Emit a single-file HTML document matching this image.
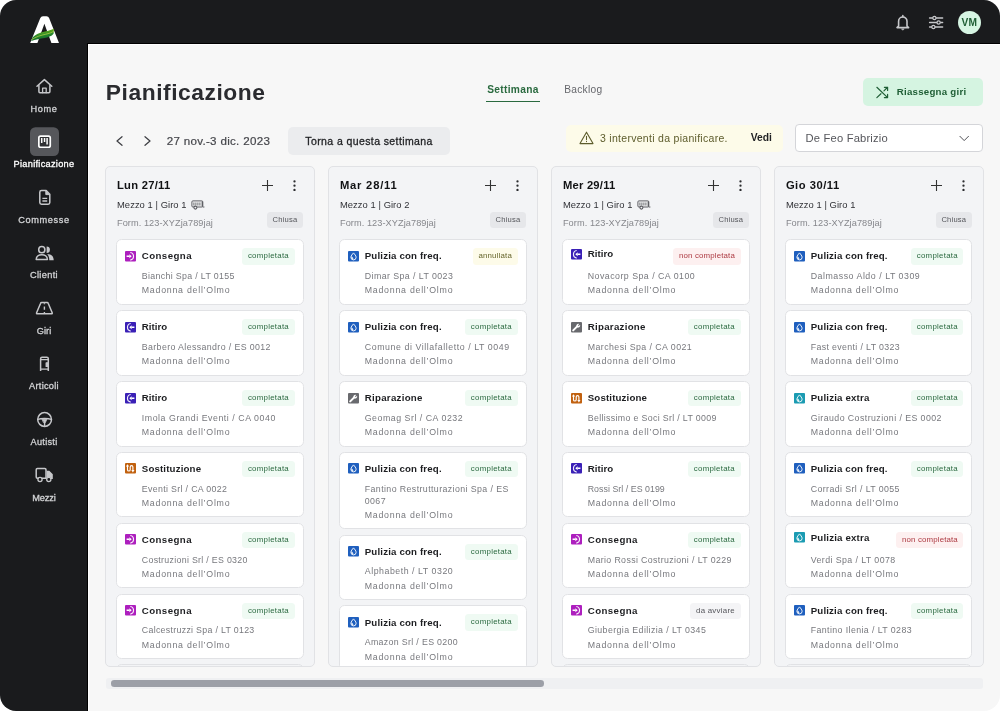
<!DOCTYPE html>
<html lang="it"><head><meta charset="utf-8"><title>Pianificazione</title>
<style>
*{box-sizing:border-box;margin:0;padding:0}
html,body{width:1000px;height:711px;overflow:hidden;background:#fff}
body{font-family:"Liberation Sans",sans-serif;position:relative;-webkit-font-smoothing:antialiased}
.frame{position:absolute;left:0;top:0;width:1000px;height:711px;will-change:transform}
.side{position:absolute;left:0;top:0;width:88px;height:711px;background:#1a1b1d;border-radius:16px 0 0 16px}
.topb{position:absolute;left:70px;top:0;width:930px;height:44px;background:#1a1b1d;border-top-right-radius:16px}
.bl{position:absolute;background:#000}
.main{position:absolute;left:88px;top:44px;width:912px;height:667px;background:#f7f7f7;border-top:1px solid #fff;border-left:1px solid #fff;border-bottom-right-radius:16px}
.sidesvg{position:absolute;left:0;top:0}
.topsvg{position:absolute;left:880px;top:0}
.nl{position:absolute;left:0;width:88px;text-align:center;font-size:9.2px;line-height:12px;color:#d2d3d5;letter-spacing:.25px;-webkit-text-stroke:.3px #d2d3d5}
.nl.sel{color:#fff;-webkit-text-stroke:.3px #fff}
.avatar{position:absolute;left:957.7px;top:10.6px;width:23.4px;height:23.4px;border-radius:50%;background:#d6f5e3;color:#1f5e35;font-weight:bold;font-size:10.2px;line-height:23.6px;text-align:center;letter-spacing:.3px}
.abs{position:absolute;white-space:nowrap}
h1.abs{left:105.8px;top:76.9px;font-size:22.8px;line-height:30px;font-weight:bold;color:#2a2b2f;letter-spacing:.55px}
.tab1{left:487.2px;top:82.5px;font-size:10.2px;line-height:14px;font-weight:bold;color:#2a6a3f;letter-spacing:.31px}
.tabline{position:absolute;left:485.5px;top:100.6px;width:54.5px;height:1.4px;background:#2a6a3f}
.tab2{left:564.2px;top:82.5px;font-size:10.2px;line-height:14px;color:#66676c;letter-spacing:.27px}
.btng{position:absolute;left:863px;top:78px;width:120.4px;height:28px;border-radius:5px;background:#d5f4e1}
.btng span{position:absolute;left:33.7px;top:6.9px;font-size:9.7px;line-height:14px;font-weight:bold;color:#1f5e35;white-space:nowrap;letter-spacing:.25px}
.btng svg{position:absolute;left:13.3px;top:7.9px}
.chev{position:absolute}
.date{left:166.7px;top:132.6px;font-size:11.6px;line-height:15px;color:#46474c;-webkit-text-stroke:.2px #46474c;letter-spacing:.3px}
.btn2{position:absolute;left:288.2px;top:127.2px;width:161.8px;height:27.4px;border-radius:5px;background:#ebecee}
.btn2 span{position:absolute;left:0;width:100%;text-align:center;top:6.4px;font-size:10.5px;line-height:14px;color:#1f2023;-webkit-text-stroke:.3px #1f2023;white-space:nowrap;letter-spacing:.4px}
.warn{position:absolute;left:566.2px;top:124.5px;width:217px;height:27px;border-radius:5px;background:#fdfbe9}
.warn svg{position:absolute;left:12.6px;top:6.5px}
.warn .t{position:absolute;left:33.8px;top:6.5px;font-size:10.5px;line-height:14px;color:#5d5c2c;white-space:nowrap;letter-spacing:.29px}
.warn .v{position:absolute;left:184.5px;top:6.5px;font-size:10.3px;line-height:14px;color:#1f2023;font-weight:bold;white-space:nowrap}
.sel2{position:absolute;left:795.2px;top:124.4px;width:188px;height:27.2px;border-radius:4px;background:#fff;border:1px solid #d4d5d9}
.sel2 span{position:absolute;left:9.4px;top:5.5px;font-size:11.2px;line-height:15px;color:#55565b;white-space:nowrap;letter-spacing:.18px}
.sel2 svg{position:absolute;left:162.6px;top:9.3px}
.col{position:absolute;top:165.7px;width:209.8px;height:501.5px;background:#f3f4f6;border:1px solid #e1e2e5;border-radius:5px;overflow:hidden}
.cday{position:absolute;left:10.9px;top:11.5px;font-size:11.2px;line-height:15px;font-weight:bold;color:#111214;white-space:nowrap;letter-spacing:.26px}
.plus{position:absolute;left:155.9px;top:13.5px;width:11px;height:11px}
.dots{position:absolute;left:187.1px;top:13.4px;width:3px;height:11.4px}
.cmz{position:absolute;left:10.9px;top:31.6px;font-size:9.4px;line-height:13px;color:#303136;white-space:nowrap;letter-spacing:.06px}
.trl{position:absolute;left:74.5px;top:1.5px}
.cform{position:absolute;left:10.9px;top:50.5px;font-size:9.2px;line-height:13px;color:#86878c;white-space:nowrap;letter-spacing:.07px}
.chiusa{position:absolute;left:160.8px;top:45.5px;width:36.1px;height:15.6px;border-radius:3.5px;background:#e6e7ea;font-size:7.6px;line-height:15.6px;text-align:center;color:#55565b;letter-spacing:.2px}
.cards{position:absolute;left:10.4px;top:72.7px;width:187.1px}
.card{position:relative;width:187.1px;background:#fff;border:1px solid #e1e2e5;border-radius:5.5px;margin-bottom:5.35px;padding:11.5px 8px 0 24.3px;overflow:hidden}
.ch{position:relative;height:13px;margin-bottom:5px}
.ic{position:absolute;left:-16.7px;top:-1px;width:11px;height:11px}
.ct{position:absolute;left:0;top:-2.6px;font-size:9.7px;line-height:14px;font-weight:bold;color:#1d1e21;white-space:nowrap;letter-spacing:.41px}

.bdg{position:absolute;right:0;top:-3.5px;height:16.2px;border-radius:3.5px;font-size:7.9px;line-height:16.9px;padding:0 5.6px;overflow:hidden;white-space:nowrap;letter-spacing:.25px}
.bc{background:#effaf3;color:#2c6a41}.ba{background:#fdfbe9;color:#66652c;letter-spacing:.17px}.bn{background:#fdf0f0;color:#ad3a42;letter-spacing:.14px}.bd{background:#f4f4f6;color:#55565b}
.cl{font-size:8.8px;line-height:12px;color:#77787d;margin-bottom:2.4px;letter-spacing:.35px;white-space:nowrap;position:relative}.cl.m{letter-spacing:.75px}
.strack{position:absolute;left:105.8px;top:677.8px;width:877.6px;height:10.8px;background:#eff0f2;border-radius:3px}
.sthumb{position:absolute;left:110.5px;top:680px;width:433px;height:6.6px;border-radius:3.3px;background:#9c9fa7}
</style></head><body>
<div class="frame">
<div class="side"></div><div class="topb"></div>
<div class="main"></div><div class="bl" style="left:87px;top:43px;width:1px;height:668px"></div><div class="bl" style="left:87px;top:43px;width:913px;height:1px"></div>
<svg class="sidesvg" width="88" height="711" viewBox="0 0 88 711" fill="none" stroke="#c6c7ca" stroke-width="1.5" stroke-linejoin="round" stroke-linecap="round">
<!-- logo -->
<path d="M30.2 43L40.2 18.3Q41 16.3 43 16.3H46.5Q48.4 16.3 49.1 18L59 43H51.4L44.4 23.8L37.4 43Z" fill="#fff" stroke="none"/>
<path d="M31.2 40.9L32.7 37.2C35.5 34.7 39 33.2 42 32.3C46 31.1 50.5 30.5 53.9 28.8L53.6 33.7C51.6 36.4 48 37.2 44.6 37.9C40 38.7 35.5 39.2 31.2 40.9Z" fill="url(#lg)" stroke="none"/>
<path d="M32 39.4C36 36.6 41 35.3 45.5 34.3C49 33.5 52 32.6 53.7 31.2" stroke="#d6e14a" stroke-width=".6" fill="none"/>
<!-- home -->
<path d="M37 86.2L44.4 79.6L51.8 86.2"/><path d="M38.9 85.5V91.6Q38.9 92.7 40 92.7H48.8Q49.9 92.7 49.9 91.6V85.5"/><path d="M42.6 92.7V88.2H46.2V92.7" stroke-width="1.3"/>
<!-- pianificazione -->
<rect x="30" y="127.2" width="29" height="28.8" rx="5.5" fill="#56575b" stroke="none"/>
<rect x="38.85" y="136.05" width="11.4" height="11.2" rx="1.8" stroke="#fff" stroke-width="1.7" fill="#303134"/>
<path d="M41.7 138V143M44.55 138V141.9M47.1 138V144.4" stroke="#fff" stroke-width="1.5" stroke-linecap="butt"/>
<!-- commesse -->
<path d="M46.2 190.6H41.5Q39.8 190.6 39.8 192.3V202.6Q39.8 204.3 41.5 204.3H48.1Q49.8 204.3 49.8 202.6V194.2Z"/><path d="M45.8 190.8V194.6H49.6" fill="#c6c7ca" stroke-width="1"/><path d="M42.4 198.4H47.2M42.4 201H47.2" stroke-width="1.4" stroke-linecap="butt"/>
<!-- clienti -->
<circle cx="41.8" cy="249.7" r="3.1" stroke-width="1.5"/>
<path d="M36.2 259.5C36.2 253.2 47.4 253.2 47.4 259.5Z" stroke-width="1.5"/>
<path d="M46.6 246.4A3.3 3.3 0 0 1 46.6 253Z" fill="#c6c7ca" stroke="none"/>
<path d="M47.2 254C51.5 254 53.7 256.5 53.7 260.2H49.3C49.3 257.5 48.6 255.5 47.2 254Z" fill="#c6c7ca" stroke="none"/>
<!-- giri -->
<path d="M41.7 302.6H47.1Q48 302.6 48.3 303.5L52.2 312.7Q52.6 313.8 51.4 313.8H37.4Q36.2 313.8 36.6 312.7L40.5 303.5Q40.8 302.6 41.7 302.6Z"/>
<path d="M44.4 303.2V304.3M44.4 306.6V309.8M44.4 312V313.4" stroke-width="1.4" stroke-linecap="butt"/>
<!-- articoli -->
<path d="M40.6 371V358.8Q40.6 357.3 42.1 357.3H46.8Q48.3 357.3 48.3 358.8V371" stroke-linecap="butt"/><path d="M40.6 369.2H48.3M40.6 359.6H48.3" stroke-width="1.2"/><path d="M48.3 362.9H46.2V366.4H48.3" stroke-width="1.3" fill="#c6c7ca"/>
<!-- autisti -->
<circle cx="44.6" cy="419.5" r="6.9"/><path d="M38 419.4C41 418.3 48.2 418.3 51.2 419.4M44.6 426V422" stroke-width="1.4"/><path d="M42.3 419.2H46.9L45.4 422.6H43.8Z" fill="#c6c7ca" stroke-width=".8"/>
<!-- mezzi -->
<path d="M38 478.3H37.4Q36.2 478.3 36.2 477.1V469.7Q36.2 468.5 37.4 468.5H44.8Q46 468.5 46 469.7V478.3H42.2"/>
<path d="M46.6 470.8H49.3L52.8 474.2V478.9H50.8A2 2 0 0 0 46.8 478.9H46.6Z" fill="#c6c7ca" stroke="none"/>
<circle cx="40" cy="479.5" r="2.1" stroke-width="1.3"/><circle cx="48.8" cy="479.5" r="2.1" stroke-width="1.3" fill="#1a1b1d"/>
<defs><linearGradient id="lg" x1="0" y1="0" x2="0.3" y2="1"><stop offset="0" stop-color="#9ccb1a"/><stop offset=".35" stop-color="#5aa51c"/><stop offset=".6" stop-color="#2a8a2c"/><stop offset="1" stop-color="#0f6a2c"/></linearGradient></defs>
</svg>
<div class="nl" style="top:102.6px;letter-spacing:0.646px">Home</div><div class="nl sel" style="top:158.4px;letter-spacing:0.3px">Pianificazione</div><div class="nl" style="top:213.6px;letter-spacing:0.654px">Commesse</div><div class="nl" style="top:269.3px;letter-spacing:0.353px">Clienti</div><div class="nl" style="top:324.7px;letter-spacing:0.076px">Giri</div><div class="nl" style="top:380.4px;letter-spacing:0.29px">Articoli</div><div class="nl" style="top:436.1px;letter-spacing:0.296px">Autisti</div><div class="nl" style="top:491.5px;letter-spacing:-0.08px">Mezzi</div>
<svg class="topsvg" width="120" height="44" viewBox="880 0 120 44" fill="none" stroke="#c6c7ca" stroke-width="1.6" stroke-linecap="round" stroke-linejoin="round">
<path d="M898.6 26V21.2A4.2 4.2 0 0 1 907 21.2V26L908.6 27.6H897Z"/><path d="M901.6 29.2A1.3 1.3 0 0 0 904 29.2Z" fill="#c6c7ca" stroke-width=".6"/><path d="M902.8 15.6V16.8"/>
<path d="M929.6 18H942.6M929.6 22.5H942.6M929.6 27H942.6" stroke-width="1.5"/>
<circle cx="934.4" cy="18" r="1.6" fill="#1a1b1d" stroke-width="1.2"/><circle cx="938.6" cy="22.5" r="1.6" fill="#1a1b1d" stroke-width="1.2"/><circle cx="933.4" cy="27" r="1.6" fill="#1a1b1d" stroke-width="1.2"/>
</svg>
<div class="avatar">VM</div>
<h1 class="abs">Pianificazione</h1>
<div class="abs tab1">Settimana</div><div class="tabline"></div>
<div class="abs tab2">Backlog</div>
<div class="btng"><svg width="12.9" height="12.9" viewBox="0 0 12 12" fill="none" stroke="#1f5e35" stroke-width="1.1" stroke-linecap="round" stroke-linejoin="round"><path d="M.8 1.2L10.8 10.8M.8 10.8L4.6 7.2M7.4 4.6L10.8 1.2M7.8 1.2H10.8V4.2M7.8 10.8H10.8V7.8"/></svg><span>Riassegna giri</span></div>
<svg class="chev" style="left:116px;top:136.2px" width="7" height="10" viewBox="0 0 7 10" fill="none" stroke="#3c3d42" stroke-width="1.2" stroke-linecap="round" stroke-linejoin="round"><path d="M6 .7L1 5L6 9.3"/></svg>
<svg class="chev" style="left:143.8px;top:136.2px" width="7" height="10" viewBox="0 0 7 10" fill="none" stroke="#3c3d42" stroke-width="1.2" stroke-linecap="round" stroke-linejoin="round"><path d="M1 .7L6 5L1 9.3"/></svg>
<div class="abs date">27 nov.-3 dic. 2023</div>
<div class="btn2"><span>Torna a questa settimana</span></div>
<div class="warn"><svg width="15" height="14" viewBox="0 0 15 14" fill="none" stroke="#5d5c2c" stroke-width="1.1" stroke-linejoin="round" stroke-linecap="round"><path d="M7.5 1.2L14 12.6H1Z"/><path d="M7.5 5.2V8.6M7.5 10.4V10.6"/></svg><span class="t">3 interventi da pianificare.</span><span class="v">Vedi</span></div>
<div class="sel2"><span>De Feo Fabrizio</span><svg width="10.4" height="6.9" viewBox="0 0 12 8" fill="none" stroke="#4e4f54" stroke-width="1.15" stroke-linecap="round" stroke-linejoin="round"><path d="M1 1.5L6 6.5L11 1.5"/></svg></div>
<div class="col" style="left:105.1px"><div class="cday" style="letter-spacing:0.267px">Lun 27/11</div><svg class="plus" viewBox="0 0 11 11"><path d="M5.5 0V11M0 5.5H11" stroke="#333" stroke-width="1.1"/></svg><svg class="dots" viewBox="0 0 3 11.4"><circle cx="1.5" cy="1.4" r="1.15" fill="#2a2b2e"/><circle cx="1.5" cy="5.7" r="1.15" fill="#2a2b2e"/><circle cx="1.5" cy="10" r="1.15" fill="#2a2b2e"/></svg><div class="cmz">Mezzo 1 | Giro 1<svg class="trl" viewBox="0 0 14 10" width="14" height="10" fill="none" stroke="#5c5d62"><rect x=".9" y=".9" width="10.9" height="6.1" rx="1" stroke-width="1"/><path d="M2.9 2.5V5.5M4.9 2.5V5.5M6.9 2.5V5.5M8.9 2.5V5.5" stroke-width=".9"/><path d="M11.3 1.5V6.5" stroke-width="1.3"/><path d="M11.8 7H13.4" stroke-width="1"/><circle cx="4.4" cy="7.6" r="1.5" stroke-width="1.1" fill="#f3f4f6"/></svg></div><div class="cform">Form. 123-XYZja789jaj</div><div class="chiusa">Chiusa</div><div class="cards"><div class="card" style="height:65.5px"><div class="ch"><svg class="ic" style="top:-1.1px" viewBox="0 0 11 11"><rect width="11" height="10.6" rx="1" fill="#ad1fbe"/><path d="M1.6 5.3H4.6" stroke="#fff" stroke-width="1.5" fill="none"/><path d="M4.4 3.3L6.7 5.3L4.4 7.3Z" fill="#fff"/><path d="M5.3 1.5A3.85 3.85 0 0 1 5.3 9.1" stroke="#fff" stroke-width="1.15" fill="none" opacity=".92"/></svg><span class="ct" style="top:-2.84px;letter-spacing:0.42px">Consegna</span><span class="bdg bc">completata</span></div><div class="cl" style="top:0.16px;letter-spacing:0.34px">Bianchi Spa / LT 0155</div><div class="cl m" style="top:-0.24px">Madonna dell’Olmo</div></div><div class="card" style="height:65.5px"><div class="ch"><svg class="ic" style="top:-1.07px" viewBox="0 0 11 11"><rect width="11" height="10.6" rx="1" fill="#3a20b6"/><path d="M9.4 5.3H6.4" stroke="#fff" stroke-width="1.5" fill="none"/><path d="M6.6 3.3L4.3 5.3L6.6 7.3Z" fill="#fff"/><path d="M5.7 1.5A3.85 3.85 0 0 0 5.7 9.1" stroke="#fff" stroke-width="1.15" fill="none" opacity=".92"/></svg><span class="ct" style="top:-2.69px;letter-spacing:0.02px">Ritiro</span><span class="bdg bc">completata</span></div><div class="cl" style="top:0.31px;letter-spacing:0.384px">Barbero Alessandro / ES 0012</div><div class="cl m" style="top:-0.09px">Madonna dell’Olmo</div></div><div class="card" style="height:65.5px"><div class="ch"><svg class="ic" style="top:-1.04px" viewBox="0 0 11 11"><rect width="11" height="10.6" rx="1" fill="#3a20b6"/><path d="M9.4 5.3H6.4" stroke="#fff" stroke-width="1.5" fill="none"/><path d="M6.6 3.3L4.3 5.3L6.6 7.3Z" fill="#fff"/><path d="M5.7 1.5A3.85 3.85 0 0 0 5.7 9.1" stroke="#fff" stroke-width="1.15" fill="none" opacity=".92"/></svg><span class="ct" style="top:-2.54px;letter-spacing:0.02px">Ritiro</span><span class="bdg bc">completata</span></div><div class="cl" style="top:0.46px;letter-spacing:0.543px">Imola Grandi Eventi / CA 0040</div><div class="cl m" style="top:0.06px">Madonna dell’Olmo</div></div><div class="card" style="height:65.5px"><div class="ch"><svg class="ic" style="top:-1.01px" viewBox="0 0 11 11"><rect width="11" height="10.6" rx="1" fill="#c1610f"/><path d="M2.5 2.6V6.7A1.35 1.35 0 0 0 5.2 6.7V3.9A1.35 1.35 0 0 1 7.9 3.9V8" stroke="#fff" stroke-width="1.15" fill="none"/><path d="M.9 3.6L2.5 1.3L4.1 3.6Z M6.3 7.1L7.9 9.4L9.5 7.1Z" fill="#fff"/></svg><span class="ct" style="top:-2.39px;letter-spacing:0.15px">Sostituzione</span><span class="bdg bc">completata</span></div><div class="cl" style="top:0.61px;letter-spacing:0.338px">Eventi Srl / CA 0022</div><div class="cl m" style="top:0.21px">Madonna dell’Olmo</div></div><div class="card" style="height:65.5px"><div class="ch"><svg class="ic" style="top:-0.98px" viewBox="0 0 11 11"><rect width="11" height="10.6" rx="1" fill="#ad1fbe"/><path d="M1.6 5.3H4.6" stroke="#fff" stroke-width="1.5" fill="none"/><path d="M4.4 3.3L6.7 5.3L4.4 7.3Z" fill="#fff"/><path d="M5.3 1.5A3.85 3.85 0 0 1 5.3 9.1" stroke="#fff" stroke-width="1.15" fill="none" opacity=".92"/></svg><span class="ct" style="top:-2.24px;letter-spacing:0.42px">Consegna</span><span class="bdg bc">completata</span></div><div class="cl" style="top:0.76px;letter-spacing:0.305px">Costruzioni Srl / ES 0320</div><div class="cl m" style="top:0.36px">Madonna dell’Olmo</div></div><div class="card" style="height:65.5px"><div class="ch"><svg class="ic" style="top:-0.95px" viewBox="0 0 11 11"><rect width="11" height="10.6" rx="1" fill="#ad1fbe"/><path d="M1.6 5.3H4.6" stroke="#fff" stroke-width="1.5" fill="none"/><path d="M4.4 3.3L6.7 5.3L4.4 7.3Z" fill="#fff"/><path d="M5.3 1.5A3.85 3.85 0 0 1 5.3 9.1" stroke="#fff" stroke-width="1.15" fill="none" opacity=".92"/></svg><span class="ct" style="top:-2.09px;letter-spacing:0.42px">Consegna</span><span class="bdg bc">completata</span></div><div class="cl" style="top:-0.09px;letter-spacing:0.307px">Calcestruzzi Spa / LT 0123</div><div class="cl m" style="top:0.51px">Madonna dell’Olmo</div></div><div class="card" style="height:65.5px;background:transparent"><div class="ch"><svg class="ic" style="top:-0.92px" viewBox="0 0 11 11"><rect width="11" height="10.6" rx="1" fill="#ad1fbe"/><path d="M1.6 5.3H4.6" stroke="#fff" stroke-width="1.5" fill="none"/><path d="M4.4 3.3L6.7 5.3L4.4 7.3Z" fill="#fff"/><path d="M5.3 1.5A3.85 3.85 0 0 1 5.3 9.1" stroke="#fff" stroke-width="1.15" fill="none" opacity=".92"/></svg><span class="ct" style="top:-1.94px;letter-spacing:0.42px">Consegna</span><span class="bdg bc">completata</span></div><div class="cl" style="top:0.06px;letter-spacing:0.38px">Edilizia Srl / LT 0456</div><div class="cl m" style="top:0.66px">Madonna dell’Olmo</div></div></div></div>
<div class="col" style="left:328.07px"><div class="cday" style="letter-spacing:0.79px">Mar 28/11</div><svg class="plus" viewBox="0 0 11 11"><path d="M5.5 0V11M0 5.5H11" stroke="#333" stroke-width="1.1"/></svg><svg class="dots" viewBox="0 0 3 11.4"><circle cx="1.5" cy="1.4" r="1.15" fill="#2a2b2e"/><circle cx="1.5" cy="5.7" r="1.15" fill="#2a2b2e"/><circle cx="1.5" cy="10" r="1.15" fill="#2a2b2e"/></svg><div class="cmz">Mezzo 1 | Giro 2</div><div class="cform">Form. 123-XYZja789jaj</div><div class="chiusa">Chiusa</div><div class="cards"><div class="card" style="height:65.5px"><div class="ch"><svg class="ic" style="top:-1.1px" viewBox="0 0 11 11"><rect width="11" height="10.6" rx="1" fill="#1f5fbe"/><path d="M5.5 1.9C6.6 3.2 8.1 4.8 8.1 6.3A2.6 2.6 0 0 1 2.9 6.3C2.9 4.8 4.4 3.2 5.5 1.9Z" stroke="#fff" stroke-width="0.9" fill="none"/><path d="M3.3 5.6C4.6 5.6 5.4 7 5.4 8.5C4 8.5 3.1 7.4 3.3 5.6Z" fill="#fff" opacity="0.85"/></svg><span class="ct" style="top:-2.84px;letter-spacing:0.16px">Pulizia con freq.</span><span class="bdg ba">annullata</span></div><div class="cl" style="top:0.16px;letter-spacing:0.428px">Dimar Spa / LT 0023</div><div class="cl m" style="top:-0.24px">Madonna dell’Olmo</div></div><div class="card" style="height:65.5px"><div class="ch"><svg class="ic" style="top:-1.07px" viewBox="0 0 11 11"><rect width="11" height="10.6" rx="1" fill="#1f5fbe"/><path d="M5.5 1.9C6.6 3.2 8.1 4.8 8.1 6.3A2.6 2.6 0 0 1 2.9 6.3C2.9 4.8 4.4 3.2 5.5 1.9Z" stroke="#fff" stroke-width="0.9" fill="none"/><path d="M3.3 5.6C4.6 5.6 5.4 7 5.4 8.5C4 8.5 3.1 7.4 3.3 5.6Z" fill="#fff" opacity="0.85"/></svg><span class="ct" style="top:-2.69px;letter-spacing:0.16px">Pulizia con freq.</span><span class="bdg bc">completata</span></div><div class="cl" style="top:0.31px;letter-spacing:0.568px">Comune di Villafalletto / LT 0049</div><div class="cl m" style="top:-0.09px">Madonna dell’Olmo</div></div><div class="card" style="height:65.5px"><div class="ch"><svg class="ic" style="top:-1.04px" viewBox="0 0 11 11"><rect width="11" height="10.6" rx="1" fill="#696a6e"/><path d="M2.2 8.4L6.2 4.4" stroke="#fff" stroke-width="2" stroke-linecap="round" fill="none"/><path d="M5.3 3.6A2.2 2.2 0 0 1 8.3 1.9L6.9 3.3L7.7 4.1L9.1 2.7A2.2 2.2 0 0 1 6.3 5.4Z" fill="#fff"/></svg><span class="ct" style="top:-2.54px;letter-spacing:0.28px">Riparazione</span><span class="bdg bc">completata</span></div><div class="cl" style="top:0.46px;letter-spacing:0.518px">Geomag Srl / CA 0232</div><div class="cl m" style="top:0.06px">Madonna dell’Olmo</div></div><div class="card" style="height:77.3px"><div class="ch"><svg class="ic" style="top:-1.01px" viewBox="0 0 11 11"><rect width="11" height="10.6" rx="1" fill="#1f5fbe"/><path d="M5.5 1.9C6.6 3.2 8.1 4.8 8.1 6.3A2.6 2.6 0 0 1 2.9 6.3C2.9 4.8 4.4 3.2 5.5 1.9Z" stroke="#fff" stroke-width="0.9" fill="none"/><path d="M3.3 5.6C4.6 5.6 5.4 7 5.4 8.5C4 8.5 3.1 7.4 3.3 5.6Z" fill="#fff" opacity="0.85"/></svg><span class="ct" style="top:-2.39px;letter-spacing:0.16px">Pulizia con freq.</span><span class="bdg bc">completata</span></div><div class="cl" style="top:0.61px;letter-spacing:0.407px">Fantino Restrutturazioni Spa / ES</div><div class="cl" style="top:-1.79px;letter-spacing:0.407px">0067</div><div class="cl m" style="top:-2.19px">Madonna dell’Olmo</div></div><div class="card" style="height:65.5px"><div class="ch"><svg class="ic" style="top:-0.98px" viewBox="0 0 11 11"><rect width="11" height="10.6" rx="1" fill="#1f5fbe"/><path d="M5.5 1.9C6.6 3.2 8.1 4.8 8.1 6.3A2.6 2.6 0 0 1 2.9 6.3C2.9 4.8 4.4 3.2 5.5 1.9Z" stroke="#fff" stroke-width="0.9" fill="none"/><path d="M3.3 5.6C4.6 5.6 5.4 7 5.4 8.5C4 8.5 3.1 7.4 3.3 5.6Z" fill="#fff" opacity="0.85"/></svg><span class="ct" style="top:-2.04px;letter-spacing:0.16px">Pulizia con freq.</span><span class="bdg bc">completata</span></div><div class="cl" style="top:-0.04px;letter-spacing:0.53px">Alphabeth / LT 0320</div><div class="cl m" style="top:0.56px">Madonna dell’Olmo</div></div><div class="card" style="height:65.5px"><div class="ch"><svg class="ic" style="top:-0.95px" viewBox="0 0 11 11"><rect width="11" height="10.6" rx="1" fill="#1f5fbe"/><path d="M5.5 1.9C6.6 3.2 8.1 4.8 8.1 6.3A2.6 2.6 0 0 1 2.9 6.3C2.9 4.8 4.4 3.2 5.5 1.9Z" stroke="#fff" stroke-width="0.9" fill="none"/><path d="M3.3 5.6C4.6 5.6 5.4 7 5.4 8.5C4 8.5 3.1 7.4 3.3 5.6Z" fill="#fff" opacity="0.85"/></svg><span class="ct" style="top:-1.89px;letter-spacing:0.16px">Pulizia con freq.</span><span class="bdg bc">completata</span></div><div class="cl" style="top:0.11px;letter-spacing:0.337px">Amazon Srl / ES 0200</div><div class="cl m" style="top:0.71px">Madonna dell’Olmo</div></div></div></div>
<div class="col" style="left:551.04px"><div class="cday" style="letter-spacing:0.245px">Mer 29/11</div><svg class="plus" viewBox="0 0 11 11"><path d="M5.5 0V11M0 5.5H11" stroke="#333" stroke-width="1.1"/></svg><svg class="dots" viewBox="0 0 3 11.4"><circle cx="1.5" cy="1.4" r="1.15" fill="#2a2b2e"/><circle cx="1.5" cy="5.7" r="1.15" fill="#2a2b2e"/><circle cx="1.5" cy="10" r="1.15" fill="#2a2b2e"/></svg><div class="cmz">Mezzo 1 | Giro 1<svg class="trl" viewBox="0 0 14 10" width="14" height="10" fill="none" stroke="#5c5d62"><rect x=".9" y=".9" width="10.9" height="6.1" rx="1" stroke-width="1"/><path d="M2.9 2.5V5.5M4.9 2.5V5.5M6.9 2.5V5.5M8.9 2.5V5.5" stroke-width=".9"/><path d="M11.3 1.5V6.5" stroke-width="1.3"/><path d="M11.8 7H13.4" stroke-width="1"/><circle cx="4.4" cy="7.6" r="1.5" stroke-width="1.1" fill="#f3f4f6"/></svg></div><div class="cform">Form. 123-XYZja789jaj</div><div class="chiusa">Chiusa</div><div class="cards"><div class="card" style="height:65.5px"><div class="ch"><svg class="ic" style="top:-3.1px" viewBox="0 0 11 11"><rect width="11" height="10.6" rx="1" fill="#3a20b6"/><path d="M9.4 5.3H6.4" stroke="#fff" stroke-width="1.5" fill="none"/><path d="M6.6 3.3L4.3 5.3L6.6 7.3Z" fill="#fff"/><path d="M5.7 1.5A3.85 3.85 0 0 0 5.7 9.1" stroke="#fff" stroke-width="1.15" fill="none" opacity=".92"/></svg><span class="ct" style="top:-4.84px;letter-spacing:0.02px">Ritiro</span><span class="bdg bn">non completata</span></div><div class="cl" style="top:0.16px;letter-spacing:0.481px">Novacorp Spa / CA 0100</div><div class="cl m" style="top:-0.24px">Madonna dell’Olmo</div></div><div class="card" style="height:65.5px"><div class="ch"><svg class="ic" style="top:-1.07px" viewBox="0 0 11 11"><rect width="11" height="10.6" rx="1" fill="#696a6e"/><path d="M2.2 8.4L6.2 4.4" stroke="#fff" stroke-width="2" stroke-linecap="round" fill="none"/><path d="M5.3 3.6A2.2 2.2 0 0 1 8.3 1.9L6.9 3.3L7.7 4.1L9.1 2.7A2.2 2.2 0 0 1 6.3 5.4Z" fill="#fff"/></svg><span class="ct" style="top:-2.69px;letter-spacing:0.28px">Riparazione</span><span class="bdg bc">completata</span></div><div class="cl" style="top:0.31px;letter-spacing:0.433px">Marchesi Spa / CA 0021</div><div class="cl m" style="top:-0.09px">Madonna dell’Olmo</div></div><div class="card" style="height:65.5px"><div class="ch"><svg class="ic" style="top:-1.04px" viewBox="0 0 11 11"><rect width="11" height="10.6" rx="1" fill="#c1610f"/><path d="M2.5 2.6V6.7A1.35 1.35 0 0 0 5.2 6.7V3.9A1.35 1.35 0 0 1 7.9 3.9V8" stroke="#fff" stroke-width="1.15" fill="none"/><path d="M.9 3.6L2.5 1.3L4.1 3.6Z M6.3 7.1L7.9 9.4L9.5 7.1Z" fill="#fff"/></svg><span class="ct" style="top:-2.54px;letter-spacing:0.15px">Sostituzione</span><span class="bdg bc">completata</span></div><div class="cl" style="top:0.46px;letter-spacing:0.339px">Bellissimo e Soci Srl / LT 0009</div><div class="cl m" style="top:0.06px">Madonna dell’Olmo</div></div><div class="card" style="height:65.5px"><div class="ch"><svg class="ic" style="top:-1.01px" viewBox="0 0 11 11"><rect width="11" height="10.6" rx="1" fill="#3a20b6"/><path d="M9.4 5.3H6.4" stroke="#fff" stroke-width="1.5" fill="none"/><path d="M6.6 3.3L4.3 5.3L6.6 7.3Z" fill="#fff"/><path d="M5.7 1.5A3.85 3.85 0 0 0 5.7 9.1" stroke="#fff" stroke-width="1.15" fill="none" opacity=".92"/></svg><span class="ct" style="top:-2.39px;letter-spacing:0.02px">Ritiro</span><span class="bdg bc">completata</span></div><div class="cl" style="top:0.61px;letter-spacing:0.043px">Rossi Srl / ES 0199</div><div class="cl m" style="top:0.21px">Madonna dell’Olmo</div></div><div class="card" style="height:65.5px"><div class="ch"><svg class="ic" style="top:-0.98px" viewBox="0 0 11 11"><rect width="11" height="10.6" rx="1" fill="#ad1fbe"/><path d="M1.6 5.3H4.6" stroke="#fff" stroke-width="1.5" fill="none"/><path d="M4.4 3.3L6.7 5.3L4.4 7.3Z" fill="#fff"/><path d="M5.3 1.5A3.85 3.85 0 0 1 5.3 9.1" stroke="#fff" stroke-width="1.15" fill="none" opacity=".92"/></svg><span class="ct" style="top:-2.24px;letter-spacing:0.42px">Consegna</span><span class="bdg bc">completata</span></div><div class="cl" style="top:0.76px;letter-spacing:0.373px">Mario Rossi Costruzioni / LT 0229</div><div class="cl m" style="top:0.36px">Madonna dell’Olmo</div></div><div class="card" style="height:65.5px"><div class="ch"><svg class="ic" style="top:-0.95px" viewBox="0 0 11 11"><rect width="11" height="10.6" rx="1" fill="#ad1fbe"/><path d="M1.6 5.3H4.6" stroke="#fff" stroke-width="1.5" fill="none"/><path d="M4.4 3.3L6.7 5.3L4.4 7.3Z" fill="#fff"/><path d="M5.3 1.5A3.85 3.85 0 0 1 5.3 9.1" stroke="#fff" stroke-width="1.15" fill="none" opacity=".92"/></svg><span class="ct" style="top:-2.09px;letter-spacing:0.42px">Consegna</span><span class="bdg bd">da avviare</span></div><div class="cl" style="top:-0.09px;letter-spacing:0.401px">Giubergia Edilizia / LT 0345</div><div class="cl m" style="top:0.51px">Madonna dell’Olmo</div></div><div class="card" style="height:65.5px;background:transparent"><div class="ch"><svg class="ic" style="top:-0.92px" viewBox="0 0 11 11"><rect width="11" height="10.6" rx="1" fill="#ad1fbe"/><path d="M1.6 5.3H4.6" stroke="#fff" stroke-width="1.5" fill="none"/><path d="M4.4 3.3L6.7 5.3L4.4 7.3Z" fill="#fff"/><path d="M5.3 1.5A3.85 3.85 0 0 1 5.3 9.1" stroke="#fff" stroke-width="1.15" fill="none" opacity=".92"/></svg><span class="ct" style="top:-1.94px;letter-spacing:0.42px">Consegna</span><span class="bdg bc">completata</span></div><div class="cl" style="top:0.06px;letter-spacing:0.38px">Edilizia Srl / LT 0456</div><div class="cl m" style="top:0.66px">Madonna dell’Olmo</div></div></div></div>
<div class="col" style="left:774.01px"><div class="cday" style="letter-spacing:0.518px">Gio 30/11</div><svg class="plus" viewBox="0 0 11 11"><path d="M5.5 0V11M0 5.5H11" stroke="#333" stroke-width="1.1"/></svg><svg class="dots" viewBox="0 0 3 11.4"><circle cx="1.5" cy="1.4" r="1.15" fill="#2a2b2e"/><circle cx="1.5" cy="5.7" r="1.15" fill="#2a2b2e"/><circle cx="1.5" cy="10" r="1.15" fill="#2a2b2e"/></svg><div class="cmz">Mezzo 1 | Giro 1</div><div class="cform">Form. 123-XYZja789jaj</div><div class="chiusa">Chiusa</div><div class="cards"><div class="card" style="height:65.5px"><div class="ch"><svg class="ic" style="top:-1.1px" viewBox="0 0 11 11"><rect width="11" height="10.6" rx="1" fill="#1f5fbe"/><path d="M5.5 1.9C6.6 3.2 8.1 4.8 8.1 6.3A2.6 2.6 0 0 1 2.9 6.3C2.9 4.8 4.4 3.2 5.5 1.9Z" stroke="#fff" stroke-width="0.9" fill="none"/><path d="M3.3 5.6C4.6 5.6 5.4 7 5.4 8.5C4 8.5 3.1 7.4 3.3 5.6Z" fill="#fff" opacity="0.85"/></svg><span class="ct" style="top:-2.84px;letter-spacing:0.16px">Pulizia con freq.</span><span class="bdg bc">completata</span></div><div class="cl" style="top:0.16px;letter-spacing:0.527px">Dalmasso Aldo / LT 0309</div><div class="cl m" style="top:-0.24px">Madonna dell’Olmo</div></div><div class="card" style="height:65.5px"><div class="ch"><svg class="ic" style="top:-1.07px" viewBox="0 0 11 11"><rect width="11" height="10.6" rx="1" fill="#1f5fbe"/><path d="M5.5 1.9C6.6 3.2 8.1 4.8 8.1 6.3A2.6 2.6 0 0 1 2.9 6.3C2.9 4.8 4.4 3.2 5.5 1.9Z" stroke="#fff" stroke-width="0.9" fill="none"/><path d="M3.3 5.6C4.6 5.6 5.4 7 5.4 8.5C4 8.5 3.1 7.4 3.3 5.6Z" fill="#fff" opacity="0.85"/></svg><span class="ct" style="top:-2.69px;letter-spacing:0.16px">Pulizia con freq.</span><span class="bdg bc">completata</span></div><div class="cl" style="top:0.31px;letter-spacing:0.356px">Fast eventi / LT 0323</div><div class="cl m" style="top:-0.09px">Madonna dell’Olmo</div></div><div class="card" style="height:65.5px"><div class="ch"><svg class="ic" style="top:-1.04px" viewBox="0 0 11 11"><rect width="11" height="10.6" rx="1" fill="#1b9bb2"/><path d="M5.5 1.9C6.6 3.2 8.1 4.8 8.1 6.3A2.6 2.6 0 0 1 2.9 6.3C2.9 4.8 4.4 3.2 5.5 1.9Z" stroke="#fff" stroke-width="0.9" fill="none"/><path d="M3.3 5.6C4.6 5.6 5.4 7 5.4 8.5C4 8.5 3.1 7.4 3.3 5.6Z" fill="#fff" opacity="0.85"/></svg><span class="ct" style="top:-2.54px;letter-spacing:0.17px">Pulizia extra</span><span class="bdg bc">completata</span></div><div class="cl" style="top:0.46px;letter-spacing:0.427px">Giraudo Costruzioni / ES 0002</div><div class="cl m" style="top:0.06px">Madonna dell’Olmo</div></div><div class="card" style="height:65.5px"><div class="ch"><svg class="ic" style="top:-1.01px" viewBox="0 0 11 11"><rect width="11" height="10.6" rx="1" fill="#1f5fbe"/><path d="M5.5 1.9C6.6 3.2 8.1 4.8 8.1 6.3A2.6 2.6 0 0 1 2.9 6.3C2.9 4.8 4.4 3.2 5.5 1.9Z" stroke="#fff" stroke-width="0.9" fill="none"/><path d="M3.3 5.6C4.6 5.6 5.4 7 5.4 8.5C4 8.5 3.1 7.4 3.3 5.6Z" fill="#fff" opacity="0.85"/></svg><span class="ct" style="top:-2.39px;letter-spacing:0.16px">Pulizia con freq.</span><span class="bdg bc">completata</span></div><div class="cl" style="top:0.61px;letter-spacing:0.398px">Corradi Srl / LT 0055</div><div class="cl m" style="top:0.21px">Madonna dell’Olmo</div></div><div class="card" style="height:65.5px"><div class="ch"><svg class="ic" style="top:-2.98px" viewBox="0 0 11 11"><rect width="11" height="10.6" rx="1" fill="#1b9bb2"/><path d="M5.5 1.9C6.6 3.2 8.1 4.8 8.1 6.3A2.6 2.6 0 0 1 2.9 6.3C2.9 4.8 4.4 3.2 5.5 1.9Z" stroke="#fff" stroke-width="0.9" fill="none"/><path d="M3.3 5.6C4.6 5.6 5.4 7 5.4 8.5C4 8.5 3.1 7.4 3.3 5.6Z" fill="#fff" opacity="0.85"/></svg><span class="ct" style="top:-4.24px;letter-spacing:0.17px">Pulizia extra</span><span class="bdg bn">non completata</span></div><div class="cl" style="top:0.76px;letter-spacing:0.418px">Verdi Spa / LT 0078</div><div class="cl m" style="top:0.36px">Madonna dell’Olmo</div></div><div class="card" style="height:65.5px"><div class="ch"><svg class="ic" style="top:-0.95px" viewBox="0 0 11 11"><rect width="11" height="10.6" rx="1" fill="#1f5fbe"/><path d="M5.5 1.9C6.6 3.2 8.1 4.8 8.1 6.3A2.6 2.6 0 0 1 2.9 6.3C2.9 4.8 4.4 3.2 5.5 1.9Z" stroke="#fff" stroke-width="0.9" fill="none"/><path d="M3.3 5.6C4.6 5.6 5.4 7 5.4 8.5C4 8.5 3.1 7.4 3.3 5.6Z" fill="#fff" opacity="0.85"/></svg><span class="ct" style="top:-2.09px;letter-spacing:0.16px">Pulizia con freq.</span><span class="bdg bc">completata</span></div><div class="cl" style="top:-0.09px;letter-spacing:0.403px">Fantino Ilenia / LT 0283</div><div class="cl m" style="top:0.51px">Madonna dell’Olmo</div></div><div class="card" style="height:65.5px;background:transparent"><div class="ch"><svg class="ic" style="top:-0.92px" viewBox="0 0 11 11"><rect width="11" height="10.6" rx="1" fill="#1f5fbe"/><path d="M5.5 1.9C6.6 3.2 8.1 4.8 8.1 6.3A2.6 2.6 0 0 1 2.9 6.3C2.9 4.8 4.4 3.2 5.5 1.9Z" stroke="#fff" stroke-width="0.9" fill="none"/><path d="M3.3 5.6C4.6 5.6 5.4 7 5.4 8.5C4 8.5 3.1 7.4 3.3 5.6Z" fill="#fff" opacity="0.85"/></svg><span class="ct" style="top:-1.94px;letter-spacing:0.16px">Pulizia con freq.</span><span class="bdg bc">completata</span></div><div class="cl" style="top:0.06px;letter-spacing:0.38px">Edilizia Srl / LT 0456</div><div class="cl m" style="top:0.66px">Madonna dell’Olmo</div></div></div></div>

<div class="strack"></div><div class="sthumb"></div>
</div>
</body></html>
